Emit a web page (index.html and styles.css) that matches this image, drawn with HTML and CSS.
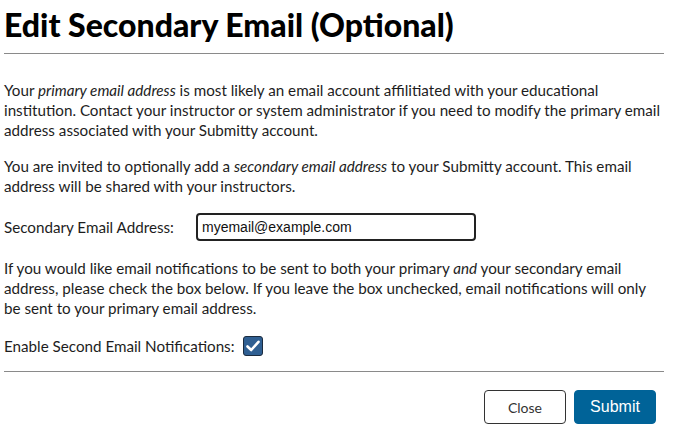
FILE: index.html
```html
<!DOCTYPE html>
<html>
<head>
<meta charset="utf-8">
<link rel="stylesheet" href="styles.css">
</head>
<body>
<div class="modal">
  <h1 class="title">Edit Secondary Email (Optional)</h1>
  <hr class="rule">
  <p class="para">Your <em>primary email address</em> is most likely an email account affilitiated with your educational institution. Contact your instructor or system administrator if you need to modify the primary email address associated with your Submitty account.</p>
  <p class="para">You are invited to optionally add a <em>secondary email address</em> to your Submitty account. This email address will be shared with your instructors.</p>
  <div class="field">
    <label class="label">Secondary Email Address:</label>
    <div class="input">myemail@example.com</div>
  </div>
  <p class="para">If you would like email notifications to be sent to both your primary <em>and</em> your secondary email address, please check the box below. If you leave the box unchecked, email notifications will only be sent to your primary email address.</p>
  <div class="field check-row">
    <span class="label">Enable Second Email Notifications:</span>
    <span class="checkbox"><svg width="14" height="12" viewBox="0 0 14 12"><path d="M1.5 6.5 L5.2 10 L12.5 1.8" fill="none" stroke="#fff" stroke-width="2.6" stroke-linecap="round" stroke-linejoin="round"/></svg></span>
  </div>
  <hr class="rule rule-bottom">
  <div class="actions">
    <button class="btn btn-close">Close</button>
    <button class="btn btn-submit">Submit</button>
  </div>
</div>
</body>
</html>
```
FILE: styles.css
```css
html, body {
  margin: 0;
  padding: 0;
  background: #fff;
}
.modal {
  width: 660px;
  margin-left: 4px;
  font-family: Lato, "Noto Sans", sans-serif;
  font-size: 15.2px;
  line-height: 20px;
  color: #1d1d1d;
}
.title {
  margin: 0;
  padding-top: 6px;
  font-size: 32px;
  line-height: 38px;
  font-weight: 900;
  color: #000;
}
.rule {
  border: 0;
  height: 1px;
  background: #8a8a8a;
  margin: 9px 0 0 0;
}
.para {
  margin: 26px 0 0 0;
}
.para + .para {
  margin-top: 16px;
}
.field {
  display: flex;
  align-items: center;
  margin-top: 17px;
}
.label {
  width: 192px;
}
.input {
  width: 268px;
  height: 24px;
  border: 2px solid #222;
  border-radius: 4px;
  padding: 0 4px;
  font-family: "Liberation Sans", Arial, sans-serif;
  font-size: 14px;
  line-height: 24px;
  color: #111;
}
.field + .para {
  margin-top: 17px;
}
.check-row {
  margin-top: 18px;
}
.check-row .label {
  width: auto;
  margin-right: 8px;
}
.checkbox {
  width: 18px;
  height: 18px;
  border: 1px solid #1b2b3e;
  border-radius: 3px;
  background: #2f5f92;
  display: flex;
  align-items: center;
  justify-content: center;
}
.rule-bottom {
  margin-top: 15px;
}
.actions {
  display: flex;
  justify-content: flex-end;
  gap: 8px;
  padding-right: 8px;
  margin-top: 18px;
}
.btn {
  width: 82px;
  height: 34px;
  border-radius: 4px;
  font-size: 16px;
}
.btn-close {
  background: #fff;
  border: 1px solid #333;
  font-family: Lato, "Noto Sans", sans-serif;
  font-size: 14px;
  color: #333;
}
.btn-submit {
  background: #006398;
  border: 1px solid #006398;
  color: #fff;
  font-family: "Liberation Sans", Arial, sans-serif;
}
```
